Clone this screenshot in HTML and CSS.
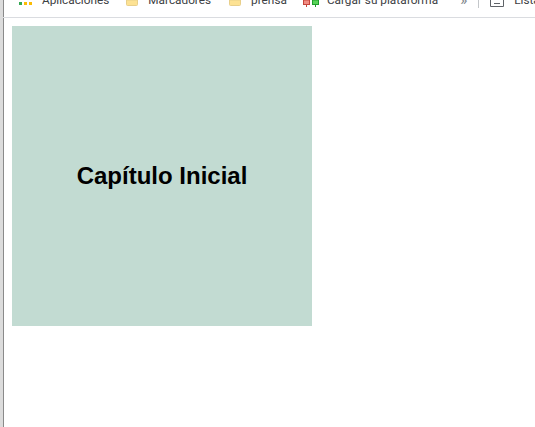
FILE: index.html
```html
<!DOCTYPE html>
<html lang="es">
<head>
    <meta charset="UTF-8">
    <title>Capítulo Inicial</title>
    <link rel="stylesheet" href="styles.css">
</head>
<body>
    <div class="window">
        <div class="bookmarks">
            <div class="bookmark apps">
                <svg width="13" height="5" viewBox="0 0 13 5">
                    <rect x="0" y="0" width="3" height="3" fill="#34a853"/>
                    <rect x="5" y="0" width="3" height="3" fill="#fbbc05"/>
                    <rect x="10" y="0" width="3" height="3" fill="#fbbc05"/>
                </svg>
                <span>Aplicaciones</span>
            </div>
            <div class="bookmark folder">
                <svg width="12" height="6" viewBox="0 0 12 6">
                    <path d="M.5 0v4.5a1 1 0 0 0 1 1h9a1 1 0 0 0 1-1V0z" fill="#fde293" stroke="#e8cf8a"/>
                </svg>
                <span>Marcadores</span>
            </div>
            <div class="bookmark folder">
                <svg width="12" height="6" viewBox="0 0 12 6">
                    <path d="M.5 0v4.5a1 1 0 0 0 1 1h9a1 1 0 0 0 1-1V0z" fill="#fde293" stroke="#e8cf8a"/>
                </svg>
                <span>prensa</span>
            </div>
            <div class="bookmark candles">
                <svg width="16" height="7" viewBox="0 0 16 7">
                    <rect x=".5" y="0" width="6" height="4.5" fill="#f28b82" stroke="#c5463c"/>
                    <path d="M3.5 5v2" stroke="#c5463c"/>
                    <rect x="9.5" y="0" width="6" height="4.5" fill="#57d357" stroke="#1f9e2c"/>
                    <path d="M12.5 5v2" stroke="#1f9e2c"/>
                </svg>
                <span>Cargar su plataforma</span>
            </div>
            <span class="more">»</span>
            <div class="separator"></div>
            <div class="bookmark list">
                <svg width="14" height="7" viewBox="0 0 14 7">
                    <path d="M.5 0v6.5h13V0" fill="none" stroke="#5f6368"/>
                    <path d="M4 3.5h6" stroke="#5f6368"/>
                </svg>
                <span>Lista de lectura</span>
            </div>
        </div>
        <div class="content">
            <div class="chapter">
                <h1>Capítulo Inicial</h1>
            </div>
        </div>
    </div>
</body>
</html>
```

FILE: styles.css
```css
html, body {
    height: 100%;
    margin: 0;
    padding: 0;
    overflow: hidden;
}

body {
    background: #fff;
}

.window {
    height: 100%;
    box-sizing: border-box;
    border-left: 3px solid #dcdcdc;
    box-shadow: inset 1px 0 0 #8a8a8a;
}

.bookmarks {
    display: flex;
    align-items: flex-end;
    box-sizing: content-box;
    height: 8px;
    padding-left: 16px;
    padding-bottom: 9px;
    overflow: hidden;
    white-space: nowrap;
    border-bottom: 1px solid #dadce0;
    font-family: Roboto, sans-serif;
    font-size: 11.8px;
    line-height: 16px;
    color: #3c4043;
}

.bookmark {
    display: flex;
    align-items: flex-end;
    flex: none;
    gap: 10px;
}

.bookmark svg {
    flex: none;
    margin-bottom: 1px;
}

.folder svg {
    margin-bottom: 2px;
}

.folder {
    margin-left: 18px;
}

.apps + .folder {
    margin-left: 17px;
}

.candles {
    margin-left: 16px;
    gap: 8px;
}

.more {
    flex: none;
    margin-left: 22px;
    font-size: 15px;
    color: #80868b;
}

.separator {
    flex: none;
    width: 1px;
    height: 8px;
    margin: 0 11px;
    background: #c4c7ca;
}

.content {
    padding: 8px;
}

.chapter {
    display: flex;
    align-items: center;
    justify-content: center;
    width: 300px;
    height: 300px;
    margin-left: 1px;
    background: #c2dbd2;
}

.chapter h1 {
    margin: 0;
    font-family: "Liberation Sans", sans-serif;
    font-size: 24px;
    font-weight: bold;
    color: #000;
}
```
